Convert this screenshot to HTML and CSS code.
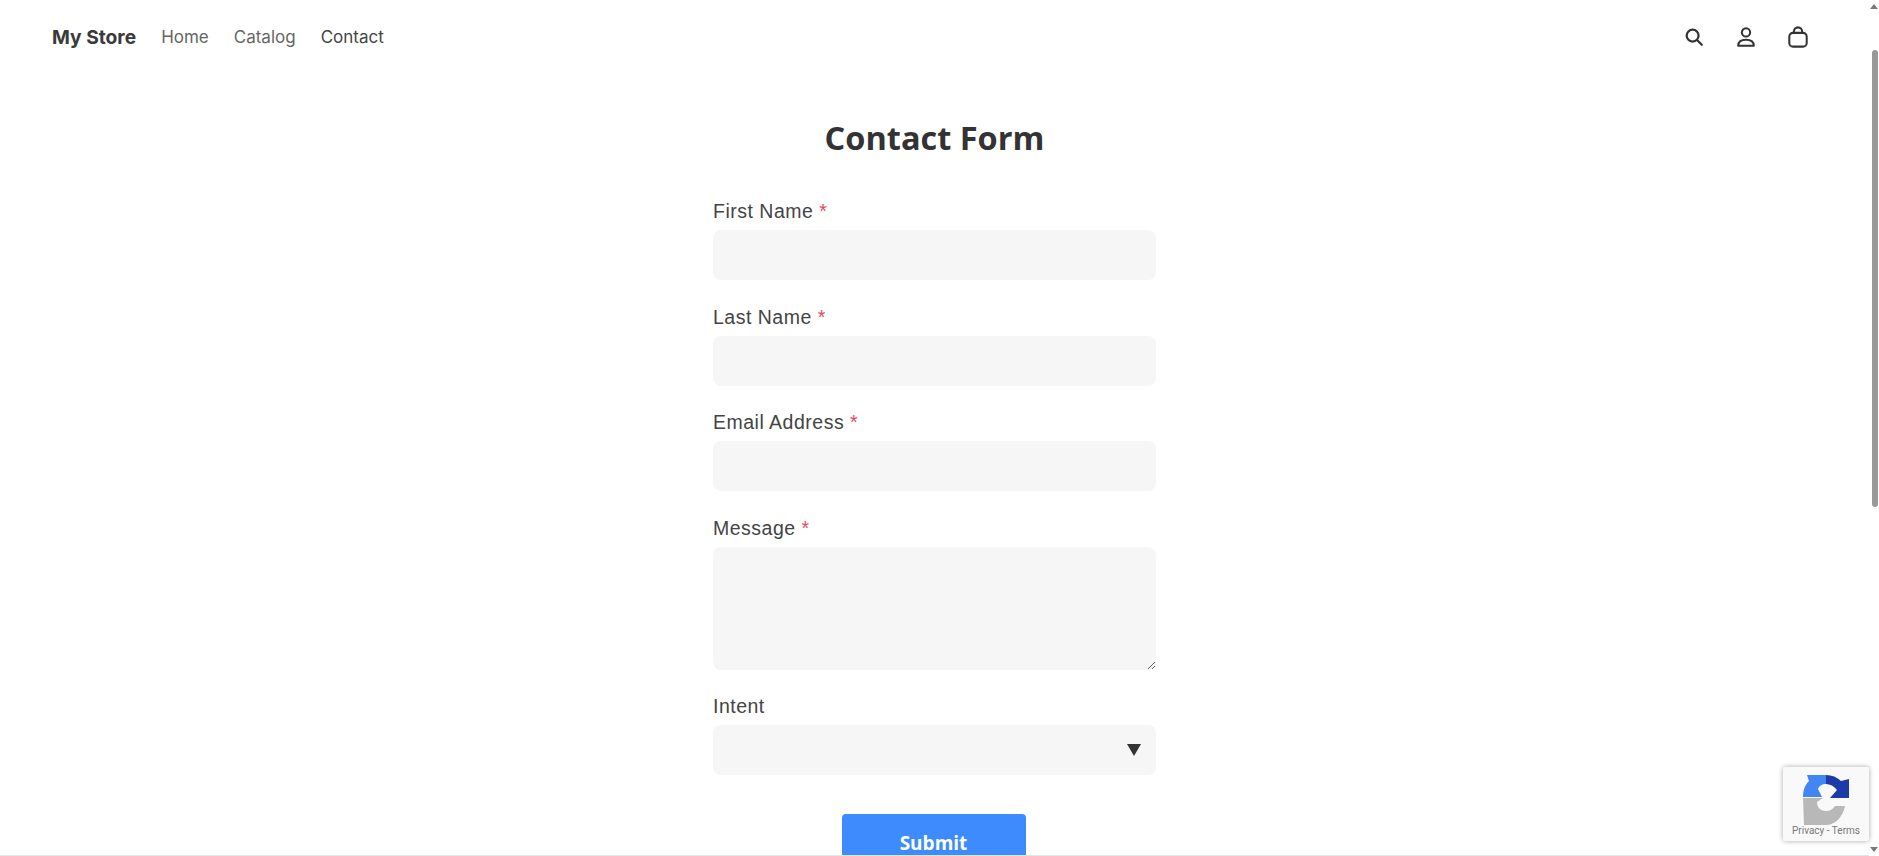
FILE: index.html
```html
<!DOCTYPE html>
<html lang="en">
<head>
    <meta charset="UTF-8">
    <meta name="viewport" content="width=device-width, initial-scale=1.0">
    <title>Contact Form</title>
    <link rel="stylesheet" href="styles.css">
</head>
<body>
    <div class="page">
        <header class="site-header">
            <nav class="nav">
                <a class="brand" href="#">My Store</a>
                <a class="nav-link" href="#">Home</a>
                <a class="nav-link" href="#">Catalog</a>
                <a class="nav-link active" href="#">Contact</a>
            </nav>
            <div class="header-icons">
                <svg class="icon" viewBox="0 0 24 24" fill="none" stroke="currentColor" stroke-width="2.4" stroke-linecap="round"><circle cx="10.5" cy="10.5" r="6.5"/><path d="M15.5 15.500L20.5 20.5"/></svg>
                <svg class="icon" viewBox="0 0 24 24" fill="none" stroke="currentColor" stroke-width="2.2" stroke-linejoin="round"><circle cx="12" cy="7" r="4.500"/><path d="M3.500 21.500c0-4.500 3.500-6.500 8.500-6.500s8.500 2 8.500 6.500z"/></svg>
                <svg class="icon" viewBox="0 0 24 24" fill="none" stroke="currentColor" stroke-width="2.2" stroke-linejoin="round"><rect x="2.500" y="7.500" width="19" height="15" rx="4"/><path d="M7.500 7.500V6a4.500 4.500 0 0 1 9 0v1.500"/></svg>
            </div>
        </header>

        <main class="content">
            <h1 class="title">Contact Form</h1>
            <form class="contact-form">
                <div class="field">
                    <label class="label" for="first">First Name <span class="req">*</span></label>
                    <input class="control" id="first" type="text">
                </div>
                <div class="field">
                    <label class="label" for="last">Last Name <span class="req">*</span></label>
                    <input class="control" id="last" type="text">
                </div>
                <div class="field">
                    <label class="label" for="email">Email Address <span class="req">*</span></label>
                    <input class="control" id="email" type="email">
                </div>
                <div class="field">
                    <label class="label" for="message">Message <span class="req">*</span></label>
                    <textarea class="control textarea" id="message"></textarea>
                </div>
                <div class="field">
                    <label class="label" for="intent">Intent</label>
                    <select class="control select" id="intent"><option></option></select>
                </div>
                <button class="submit" type="button">Submit</button>
            </form>
        </main>
    </div>

    <div class="scrollbar">
        <span class="arrow arrow-up"></span>
        <span class="thumb"></span>
        <span class="arrow arrow-down"></span>
    </div>

    <div class="recaptcha">
        <svg class="recaptcha-logo" viewBox="0 0 46 51">
            <path fill="#b8b8b8" d="M0 24H20L14 28C14 34 18 37 23 37C27 37 30 35 32 32H42C40 43 32 51 23 51H1Z"/>
            <path fill="#4285f4" d="M0 23C0 16 2 11 6 7L4 1H23V10C19 10 16 12 15 15L19 23Z"/>
            <path fill="#1c3aa9" d="M23 1C29 1 34 3 38 7L46 5V24H27L34 16C31 12 27 10 23 10Z"/>
        </svg>
        <span class="recaptcha-links">Privacy - Terms</span>
    </div>
</body>
</html>
```

FILE: styles.css
```css
html, body {
    height: 100%;
    margin: 0;
    overflow: hidden;
    background: #ffffff;
}
body {
    display: flex;
    color: #333333;
    font-family: Inter, Arial, sans-serif;
}
.page {
    flex: 1;
    min-width: 0;
    border-bottom: 1px solid #e3e6e8;
    box-sizing: border-box;
    overflow: hidden;
}

/* header */
.site-header {
    display: flex;
    justify-content: space-between;
    align-items: center;
    height: 74px;
    padding: 0 60px 0 52px;
}
.nav {
    display: flex;
    align-items: center;
    gap: 25px;
}
.nav a {
    text-decoration: none;
    font-size: 17px;
    color: #666666;
}
.nav .brand {
    font-size: 19.2px;
    font-weight: 700;
    color: #3a3a3a;
}
.nav .active { color: #444444; }
.header-icons {
    display: flex;
    align-items: center;
    gap: 30px;
    color: #333333;
}
.icon { width: 22px; height: 22px; }

/* form */
.content {
    display: flex;
    flex-direction: column;
    align-items: center;
}
.title {
    margin: 44px 0 0;
    font-family: "Open Sans", Arial, sans-serif;
    font-size: 32.5px;
    font-weight: 700;
    line-height: 40px;
    color: #333333;
}
.contact-form {
    display: flex;
    flex-direction: column;
    width: 443px;
    margin-top: 41px;
}
.field {
    display: flex;
    flex-direction: column;
    margin-bottom: 24.5px;
}
.label {
    font-family: "Liberation Sans", Arial, sans-serif;
    font-size: 19.5px;
    line-height: 24px;
    letter-spacing: 0.5px;
    margin-bottom: 7px;
    color: #444444;
}
.req { color: #e8475f; }
.control {
    display: block;
    box-sizing: border-box;
    width: 100%;
    height: 50px;
    border: none;
    border-radius: 8px;
    background: #f6f6f6;
    padding: 0 16px;
    outline: none;
}
.textarea { height: 123px; resize: vertical; }
.select {
    appearance: none;
    background-image: url("data:image/svg+xml,%3Csvg xmlns='http://www.w3.org/2000/svg' width='14' height='12'%3E%3Cpath d='M0 0h14L7 12z' fill='%23333'/%3E%3C/svg%3E");
    background-repeat: no-repeat;
    background-position: right 15px center;
}
.submit {
    align-self: center;
    width: 184px;
    height: 58px;
    margin: 14px 2px 0 0;
    border: none;
    border-radius: 4px;
    background: #3d8bfd;
    color: #ffffff;
    font-family: "Open Sans", Arial, sans-serif;
    font-size: 19px;
    font-weight: 700;
}

/* fake page scrollbar, the screenshot browser hides the real one */
.scrollbar {
    display: flex;
    flex-direction: column;
    align-items: center;
    justify-content: space-between;
    flex: 0 0 10px;
    height: 100%;
    padding: 4px 0;
    box-sizing: border-box;
    position: relative;
}
.thumb {
    position: absolute;
    top: 50px;
    left: 3px;
    width: 6px;
    height: 457px;
    border-radius: 3px;
    background: #999999;
}
.arrow {
    width: 0;
    height: 0;
    border-left: 4px solid transparent;
    border-right: 4px solid transparent;
}
.arrow-up { border-bottom: 5px solid #7a7a7a; }
.arrow-down { border-top: 5px solid #7a7a7a; }

/* recaptcha badge */
.recaptcha {
    position: absolute;
    right: 10px;
    bottom: 15px;
    display: flex;
    flex-direction: column;
    align-items: center;
    width: 86px;
    height: 74px;
    box-sizing: border-box;
    padding-top: 7px;
    background: #f9f9f9;
    box-shadow: 0 0 5px rgba(0, 0, 0, 0.35);
    border-radius: 2px;
}
.recaptcha-logo { width: 46px; height: 51px; flex: none; }
.recaptcha-links {
    font-family: Roboto, Arial, sans-serif;
    font-size: 10px;
    line-height: 14px;
    color: #777777;
    margin-top: -1px;
}
```
